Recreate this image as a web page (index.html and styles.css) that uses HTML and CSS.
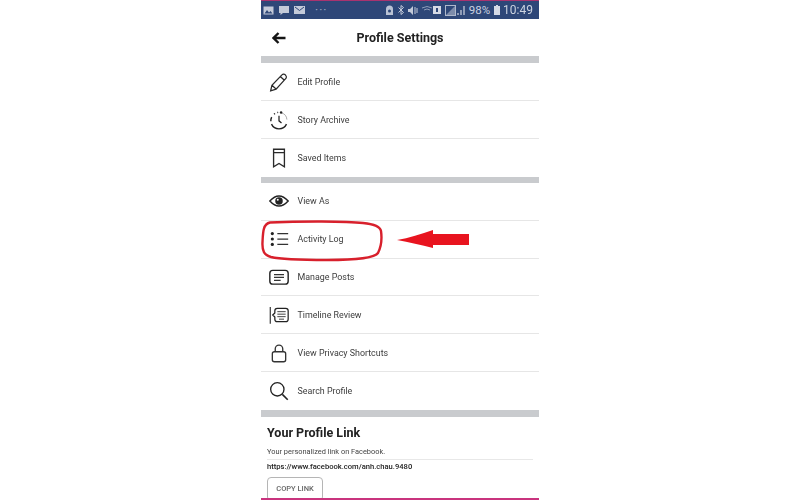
FILE: index.html
```html
<!DOCTYPE html>
<html lang="en">
<head>
  <meta charset="UTF-8" />
  <meta name="viewport" content="width=device-width, initial-scale=1.0" />
  <title>Profile Settings</title>
  <link rel="stylesheet" href="styles.css">
</head>
<body>
  <div class="phone">
    <div class="status-bar">
      <div class="status-left">
        <svg width="11" height="9" viewBox="0 0 11 9"><rect x="0.5" y="0.5" width="10" height="8" fill="#c3cad9"/><path d="M1.5 7.5 4 4l2 2.5L7.5 5l2 2.5z" fill="#2e4778"/></svg>
        <svg width="10" height="9" viewBox="0 0 10 9"><path d="M0 0h10v7H4L1.5 9V7H0z" fill="#c3cad9"/></svg>
        <svg width="11" height="8" viewBox="0 0 11 8"><rect width="11" height="8" fill="#c3cad9"/><path d="M1 1l4.500 3.500L10 1" fill="none" stroke="#2e4778"/></svg>
        <span class="dots">&middot;&middot;&middot;</span>
      </div>
      <div class="status-right">
        <svg width="9" height="11" viewBox="0 0 9 11"><path d="M1 4a3.500 3.500 0 0 1 7 0v6H1z" fill="#b9c2d4"/><circle cx="4.500" cy="6" r="1.500" fill="#2e4778"/></svg>
        <svg width="6" height="10" viewBox="0 0 6 10"><path d="M0.500 2.500l5 5L3 9.500v-9l2.500 2-5 5" fill="none" stroke="#c3cad9"/></svg>
        <svg width="10" height="9" viewBox="0 0 10 9"><path d="M0 3h2l3-3v9L2 6H0z" fill="#c3cad9"/><path d="M7 1v7M9 2v5" stroke="#c3cad9"/></svg>
        <svg class="wifi" width="19" height="10" viewBox="0 0 19 10"><path d="M0 3q5-3 10 0M2 5q3-2 6 0" fill="none" stroke="#8f9db9"/><rect x="11" y="1" width="8" height="8" fill="#d5dae5"/><rect x="14" y="3" width="2" height="4" fill="#2e4778"/></svg>
        <svg class="signal" width="21" height="11" viewBox="0 0 21 11"><rect x="0.500" y="0.500" width="10" height="10" fill="none" stroke="#aeb8cc"/><path d="M1 10 10 1v9z" fill="#7d8cab"/><path d="M13 10V8M16 10V5M19 10V1" stroke="#c3cad9" stroke-width="1.300"/></svg>
        <span class="battery-text">98%</span>
        <svg width="6" height="10" viewBox="0 0 6 10"><path d="M2 0h2v1h2v9H0V1h2z" fill="#d5dae5"/></svg>
        <span class="clock">10:49</span>
      </div>
    </div>

    <header class="title-bar">
      <svg class="back" width="14" height="12" viewBox="0 0 14 12"><path d="M13.500 6H2M6.500 1 1.500 6l5 5" fill="none" stroke="#151515" stroke-width="2.400"/></svg>
      <h1>Profile Settings</h1>
    </header>

    <div class="band"></div>

    <ul class="menu">
      <li>
        <svg viewBox="0 0 24 24"><path d="M2 22.500l1.500-6.500L15.500 3.500a2.800 2.800 0 0 1 4.500 0.500 2.800 2.800 0 0 1 0 4L8.500 20.500z M13.500 5.500l5 4.500M3.500 16l5 4.500" fill="none" stroke="#2a2a2a" stroke-width="1.500"/></svg>
        Edit Profile
      </li>
      <li>
        <svg viewBox="0 0 24 24"><path d="M3 17a10 10 0 0 0 18 0" fill="none" stroke="#222" stroke-width="1.700"/><path d="M2.200 13.500a10 10 0 0 1 1-5M6 5l1.200-.8M10 3l1-.2" fill="none" stroke="#222" stroke-width="1.700"/><path d="M15 3.500a9 9 0 0 1 6.500 8" fill="none" stroke="#999" stroke-width="1"/><circle cx="14.500" cy="3" r="1.500" fill="#222"/><path d="M12 7v6l3 2.500" fill="none" stroke="#222" stroke-width="1.500"/></svg>
        Story Archive
      </li>
      <li>
        <svg viewBox="0 0 24 24"><path d="M5.500 1.500h13v21l-6.500-4-6.500 4z M5.500 5.500h13" fill="none" stroke="#2a2a2a" stroke-width="1.600"/></svg>
        Saved Items
      </li>
    </ul>

    <div class="band band-thin"></div>

    <ul class="menu menu-tall">
      <li>
        <svg viewBox="0 0 24 24"><path d="M1 12q11-12 22 0q-11 12-22 0z" fill="none" stroke="#222" stroke-width="1.700"/><circle cx="12" cy="12" r="4.500" fill="#222"/><circle cx="10.500" cy="10.500" r="1.200" fill="#fff"/></svg>
        View As
      </li>
      <li>
        <svg viewBox="0 0 24 24"><circle cx="4" cy="5.500" r="1.900" fill="#222"/><circle cx="4" cy="12" r="1.900" fill="#222"/><circle cx="4" cy="18.500" r="1.900" fill="#222"/><path d="M10 5.500h13M10 12h13M10 18.500h13" stroke="#333" stroke-width="1.500"/></svg>
        Activity Log
      </li>
      <li>
        <svg viewBox="0 0 24 24"><rect x="1" y="4" width="22" height="16.500" rx="3.500" fill="none" stroke="#222" stroke-width="1.700"/><path d="M6 9h12M6 12.500h12M6 16h8" stroke="#333" stroke-width="1.500"/></svg>
        Manage Posts
      </li>
      <li>
        <svg viewBox="0 0 24 24"><path d="M1.500 2.500v20" stroke="#222" stroke-width="1.300"/><path d="M4.500 12 7 9.500V7a3 3 0 0 1 3-3h10a3 3 0 0 1 3 3v10a3 3 0 0 1-3 3H10a3 3 0 0 1-3-3v-2.500z" fill="none" stroke="#222" stroke-width="1.500"/><path d="M10 8h10M10 11h10M10 14h10M12 17h6" stroke="#444" stroke-width="1.200"/></svg>
        Timeline Review
      </li>
      <li>
        <svg viewBox="0 0 24 24"><rect x="4" y="10.500" width="16" height="12" rx="2.500" fill="none" stroke="#333" stroke-width="1.600"/><path d="M7.500 10.500V7a4.500 4.500 0 0 1 9 0v3.500" fill="none" stroke="#333" stroke-width="1.600"/></svg>
        View Privacy Shortcuts
      </li>
      <li>
        <svg viewBox="0 0 24 24"><circle cx="10" cy="10" r="8" fill="none" stroke="#222" stroke-width="1.600"/><path d="M16 16l6.500 6.500" stroke="#222" stroke-width="1.900"/></svg>
        Search Profile
      </li>
    </ul>

    <div class="band"></div>

    <section class="profile-link">
      <h2>Your Profile Link</h2>
      <p class="hint">Your personalized link on Facebook.</p>
      <p class="url">https://www.facebook.com/anh.chau.9480</p>
      <button class="copy-btn">COPY LINK</button>
    </section>

    <div class="bottom-line"></div>

    <!-- red marks drawn over the screenshot -->
    <svg class="markup" width="250" height="50" viewBox="0 0 250 50">
      <path d="M9 4.500C40 3 85 3 102 5C112 6 119 8 120 13C121 20 120 29 117 35C113 41 90 42 66 42C45 42 22 42 10 39C3 37 1 33 1.500 24C2 14 2 6 9 4.500z" fill="none" stroke="#d8202c" stroke-width="2.400"/>
      <path d="M136 22C148 20 160 16 172 12V16H208V27H172V30C160 27 148 24 136 22z" fill="#e8141f"/>
    </svg>
  </div>
</body>
</html>
```

FILE: styles.css
```css
* {
  box-sizing: border-box;
}

body {
  margin: 0;
  height: 500px;
  overflow: hidden;
  background-color: #fff;
  font-family: Roboto, 'Liberation Sans', sans-serif;
  color: #333;
  display: flex;
  justify-content: center;
}

.phone {
  position: relative;
  width: 278px;
  height: 500px;
  display: flex;
  flex-direction: column;
  overflow: hidden;
  filter: blur(0.4px);
}

.status-bar {
  height: 19px;
  flex-shrink: 0;
  background-color: #2e4778;
  border-top: 1px solid #a8336f;
  display: flex;
  align-items: center;
  justify-content: space-between;
  padding: 0 6px 0 2px;
  color: #ccd3e0;
}

.status-left,
.status-right {
  display: flex;
  align-items: center;
}

.status-left {
  gap: 5px;
}

.status-right {
  gap: 4px;
}

.dots {
  font-size: 12px;
  letter-spacing: 1px;
  margin-left: 5px;
  color: #9aa7c0;
}

.battery-text {
  font-size: 11.500px;
  margin-left: -1px;
}

.clock {
  font-size: 12px;
  margin-left: -1px;
}

.title-bar {
  position: relative;
  height: 37px;
  flex-shrink: 0;
  display: flex;
  align-items: center;
  justify-content: center;
}

.title-bar h1 {
  margin: 0;
  font-size: 12.500px;
  font-weight: 700;
  color: #222;
}

.back {
  position: absolute;
  left: 11px;
  top: 13px;
}

.band {
  height: 7px;
  flex-shrink: 0;
  background-color: #c9cbce;
}

.band-thin {
  height: 6px;
}

.menu {
  list-style: none;
  margin: 0;
  padding: 0;
  flex-shrink: 0;
}

.menu li {
  height: 38px;
  display: flex;
  align-items: center;
  gap: 8.500px;
  padding: 0 8px;
  font-size: 8.900px;
  color: #3c3c3c;
  border-bottom: 1px solid #e6e6e6;
}

.menu li:last-child {
  border-bottom: none;
}

.menu-tall li {
  height: 37.800px;
}

.menu svg {
  width: 20px;
  height: 20px;
  flex-shrink: 0;
}

.profile-link {
  flex: 1;
  min-height: 0;
  padding: 0 6px;
}

.profile-link h2 {
  margin: 8px 0 0;
  font-size: 12.500px;
  font-weight: 700;
  color: #222;
}

.hint {
  margin: 7px 0 0;
  padding-bottom: 3px;
  font-size: 7.400px;
  color: #444;
  border-bottom: 1px solid #e8e8e8;
}

.url {
  margin: 2px 0 0;
  font-size: 7.600px;
  font-weight: 500;
  color: #222;
}

.copy-btn {
  display: block;
  margin-top: 6px;
  width: 56px;
  height: 24px;
  padding: 0;
  background-color: #fff;
  border: 1px solid #b5b5b5;
  border-radius: 4px;
  font-family: inherit;
  font-size: 7.500px;
  font-weight: 500;
  color: #666;
}

.bottom-line {
  position: absolute;
  left: 0;
  right: 0;
  bottom: 0;
  height: 2px;
  background-color: #c9347e;
}

.markup {
  position: absolute;
  left: 0;
  top: 218px;
}
```
